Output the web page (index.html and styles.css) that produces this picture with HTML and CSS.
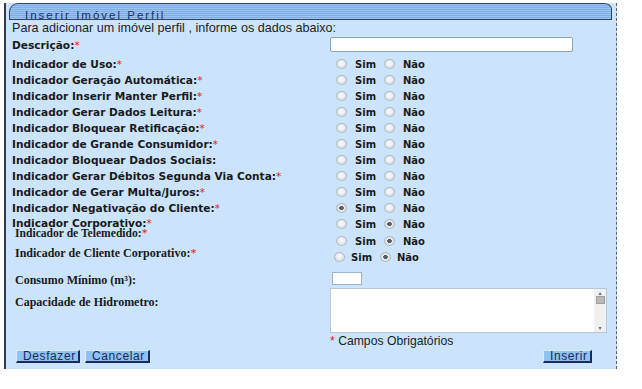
FILE: index.html
```html
<!DOCTYPE html>
<html lang="pt-BR">
<head>
    <meta charset="UTF-8">
    <title>Inserir Imóvel Perfil</title>
    <link rel="stylesheet" href="styles.css">
</head>
<body>
    <div class="panel">
        <div class="title-bar"><span>Inserir Imóvel Perfil</span></div>
        <p class="intro">Para adicionar um imóvel perfil , informe os dados abaixo:</p>

        <form class="form">
            <div class="row row-desc">
                <label>Descrição:<span class="req">*</span></label>
                <input type="text" class="txt-desc">
            </div>

            <div class="row">
                <label>Indicador de Uso:<span class="req">*</span></label>
                <div class="opts"><input type="radio" name="uso"><span>Sim</span><input type="radio" name="uso"><span>Não</span></div>
            </div>
            <div class="row">
                <label>Indicador Geração Automática:<span class="req">*</span></label>
                <div class="opts"><input type="radio" name="ger"><span>Sim</span><input type="radio" name="ger"><span>Não</span></div>
            </div>
            <div class="row">
                <label>Indicador Inserir Manter Perfil:<span class="req">*</span></label>
                <div class="opts"><input type="radio" name="ins"><span>Sim</span><input type="radio" name="ins"><span>Não</span></div>
            </div>
            <div class="row">
                <label>Indicador Gerar Dados Leitura:<span class="req">*</span></label>
                <div class="opts"><input type="radio" name="lei"><span>Sim</span><input type="radio" name="lei"><span>Não</span></div>
            </div>
            <div class="row">
                <label>Indicador Bloquear Retificação:<span class="req">*</span></label>
                <div class="opts"><input type="radio" name="ret"><span>Sim</span><input type="radio" name="ret"><span>Não</span></div>
            </div>
            <div class="row">
                <label>Indicador de Grande Consumidor:<span class="req">*</span></label>
                <div class="opts"><input type="radio" name="gra"><span>Sim</span><input type="radio" name="gra"><span>Não</span></div>
            </div>
            <div class="row">
                <label>Indicador Bloquear Dados Sociais:</label>
                <div class="opts"><input type="radio" name="soc"><span>Sim</span><input type="radio" name="soc"><span>Não</span></div>
            </div>
            <div class="row">
                <label>Indicador Gerar Débitos Segunda Via Conta:<span class="req">*</span></label>
                <div class="opts"><input type="radio" name="deb"><span>Sim</span><input type="radio" name="deb"><span>Não</span></div>
            </div>
            <div class="row">
                <label>Indicador de Gerar Multa/Juros:<span class="req">*</span></label>
                <div class="opts"><input type="radio" name="mul"><span>Sim</span><input type="radio" name="mul"><span>Não</span></div>
            </div>
            <div class="row">
                <label>Indicador Negativação do Cliente:<span class="req">*</span></label>
                <div class="opts"><input type="radio" name="neg" checked><span>Sim</span><input type="radio" name="neg"><span>Não</span></div>
            </div>
            <div class="row row-corp">
                <label>Indicador Corporativo:<span class="req">*</span></label>
                <div class="opts"><input type="radio" name="cor"><span>Sim</span><input type="radio" name="cor" checked><span>Não</span></div>
            </div>
            <div class="row row-tele">
                <label class="serif">Indicador de Telemedido:<span class="req">*</span></label>
                <div class="opts"><input type="radio" name="tel"><span>Sim</span><input type="radio" name="tel" checked><span>Não</span></div>
            </div>
            <div class="row row-cli">
                <label class="serif">Indicador de Cliente Corporativo:<span class="req">*</span></label>
                <div class="opts opts-shift"><input type="radio" name="cli"><span>Sim</span><input type="radio" name="cli" checked><span>Não</span></div>
            </div>

            <div class="row row-consumo">
                <label class="serif">Consumo Mínimo (m³):</label>
                <input type="text" class="txt-consumo">
            </div>
            <div class="row row-cap">
                <label class="serif">Capacidade de Hidrometro:</label>
                <div class="memo">
                    <textarea></textarea>
                    <div class="scroll">
                        <span class="arrow">&#9652;</span>
                        <span class="thumb"></span>
                        <span class="fill"></span>
                        <span class="arrow">&#9662;</span>
                    </div>
                </div>
            </div>

            <p class="obrig"><span class="req">*</span> Campos Obrigatórios</p>

            <div class="buttons">
                <button type="button" class="btn btn-desfazer">Desfazer</button>
                <button type="button" class="btn btn-cancelar">Cancelar</button>
                <button type="submit" class="btn btn-inserir">Inserir</button>
            </div>
        </form>
    </div>
</body>
</html>
```

FILE: styles.css
```css
* {
    margin: 0;
    padding: 0;
    box-sizing: border-box;
}

body {
    background: #fff;
    font-family: 'DejaVu Sans', Verdana, sans-serif;
    color: #1a1a1a;
}

.panel {
    margin: 3px 0 0 4px;
    width: 613px;
    height: 366px;
    background: #cce4fb;
    border-left: 2px solid #2f3a52;
    border-right: 1px dashed #5a6070;
    padding: 0 4px 0 3px;
}

.title-bar {
    height: 17px;
    border: 1px solid #34425e;
    border-radius: 9px 8px 0 0 / 9px 6px 0 0;
    background: repeating-linear-gradient(to bottom, #9ac2ef 0, #9ac2ef 1px, #7fafe6 1px, #7fafe6 2px);
    padding-left: 15px;
}

.title-bar span {
    font-family: 'Liberation Sans', Arial, sans-serif;
    font-size: 11.5px;
    line-height: 15px;
    letter-spacing: 2px;
    color: #1c2f66;
}

.intro {
    font-family: 'Liberation Sans', Arial, sans-serif;
    font-size: 12.6px;
    line-height: 14px;
    margin-top: 1px;
    padding-left: 3px;
    color: #1e1e1e;
}

.form {
    padding-left: 3px;
}

.row {
    display: flex;
    align-items: center;
    height: 16px;
}

.row label {
    width: 318px;
    flex: none;
    font-size: 10.6px;
    font-weight: bold;
    line-height: 12px;
}

.row label.serif {
    font-family: 'Liberation Serif', 'Times New Roman', serif;
    font-size: 12px;
    padding-left: 3px;
}

.req {
    color: #e0202a;
    font-weight: normal;
}

.row-desc {
    height: 19px;
    margin-bottom: 2px;
}

.txt-desc {
    width: 243px;
    height: 15px;
    border: 1px solid #8aa4c4;
    border-radius: 2px;
    background: #fff;
}

.opts {
    display: flex;
    align-items: center;
    padding-left: 6px;
    font-size: 10px;
    font-weight: bold;
}

.opts span {
    width: 29px;
}

.opts input {
    appearance: none;
    width: 11px;
    height: 10px;
    margin-right: 8px;
    border: 1px solid #b4bac2;
    border-radius: 50%;
    background: radial-gradient(circle at 50% 40%, #fbfbfb 0, #e4e6e8 60%, #cfd3d7 100%);
}

.opts input:checked {
    background: radial-gradient(circle, #5a5e64 0, #5a5e64 2px, #e8eaec 2.5px, #d2d5d8 100%);
}

.row-corp label {
    line-height: 10px;
    margin-bottom: 3px;
}

.row-tele {
    height: 18px;
}

.row-tele label.serif {
    align-self: flex-start;
    margin-top: -3px;
    line-height: 10px;
    font-size: 11.6px;
}

.row-cli {
    height: 14px;
}

.row-cli label {
    align-self: flex-start;
    margin-top: -3px;
    padding-left: 5px;
}

.opts-shift {
    padding-left: 4px;
}

.opts-shift input {
    margin-right: 6px;
}

.row-consumo {
    align-items: flex-start;
    margin-top: 8px;
}

.row-consumo label {
    margin-top: 2px;
    padding-left: 4px;
}

.txt-consumo {
    width: 30px;
    height: 13px;
    margin-left: 2px;
    border: 1px solid #9db2cc;
    background: #fff;
}

.row-cap {
    align-items: flex-start;
    height: 45px;
}

.row-cap label {
    margin-top: 8px;
    padding-left: 4px;
}

.memo {
    display: flex;
    width: 277px;
    height: 45px;
    background: #fff;
    border: 1px solid #b9c6d6;
}

.memo textarea {
    flex: 1;
    border: none;
    resize: none;
    outline: none;
}

.scroll {
    width: 12px;
    display: flex;
    flex-direction: column;
    align-items: center;
    background: #f0f0f0;
    padding: 1px 0;
}

.arrow {
    font-size: 6px;
    line-height: 6px;
    color: #666;
}

.thumb {
    width: 9px;
    height: 8px;
    background: #b8b8b8;
    border: 1px solid #a0a0a0;
}

.fill {
    flex: 1;
}

.obrig {
    font-family: 'Liberation Sans', Arial, sans-serif;
    font-size: 12.2px;
    line-height: 16px;
    padding-left: 318px;
    color: #222;
}

.buttons {
    display: flex;
    margin-top: 1px;
    padding-left: 4px;
}

.btn {
    height: 13px;
    font-family: 'Liberation Sans', Arial, sans-serif;
    font-size: 12px;
    line-height: 11px;
    letter-spacing: 0.6px;
    color: #1c2a58;
    background: #8ec2f2;
    border: 1px solid #1c2a55;
    border-top-color: #d6ebff;
    border-left-color: #d6ebff;
    border-width: 1px 2px 2px 1px;
    padding: 0 0 0 6px;
    text-align: left;
}

.btn-desfazer {
    width: 64px;
}

.btn-cancelar {
    width: 65px;
    margin-left: 5px;
}

.btn-inserir {
    width: 49px;
    margin-left: auto;
    margin-right: 20px;
}
```
